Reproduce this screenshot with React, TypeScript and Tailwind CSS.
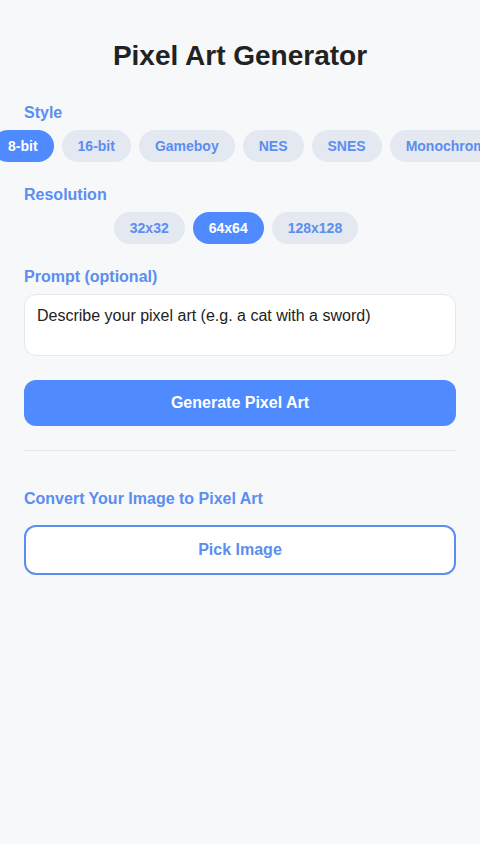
import { useState } from 'react'

const STYLES = ['8-bit', '16-bit', 'Gameboy', 'NES', 'SNES', 'Monochrome']
const RESOLUTIONS = ['32x32', '64x64', '128x128']

function Chip({ label, active, onClick }: { label: string; active: boolean; onClick: () => void }) {
  return (
    <button
      onClick={onClick}
      className={`mr-2 flex h-8 shrink-0 items-center rounded-full px-4 text-sm font-bold whitespace-nowrap ${
        active ? 'bg-[#4f8aff] text-white' : 'bg-[#e3e8f1] text-[#5b8eef]'
      }`}
    >
      {label}
    </button>
  )
}

export default function App() {
  const [style, setStyle] = useState('8-bit')
  const [res, setRes] = useState('64x64')
  const [prompt, setPrompt] = useState('')

  return (
    <div
      className="min-h-[844px] overflow-hidden bg-[#f7f8fa] px-6 pt-10"
      style={{ fontFamily: '"Liberation Sans", Arial, sans-serif' }}
    >
      <h1 className="text-center text-[28px] leading-8 font-bold text-[#222222]">Pixel Art Generator</h1>

      {/* 風格 */}
      <p className="mt-[33px] text-base leading-4 font-bold text-[#5a8ef0]">Style</p>
      <div className="mt-[9px] -ml-8 flex">
        {STYLES.map(s => (
          <Chip key={s} label={s} active={style === s} onClick={() => setStyle(s)} />
        ))}
      </div>

      {/* 解析度 */}
      <p className="mt-[25px] text-base leading-4 font-bold text-[#5a8ef0]">Resolution</p>
      <div className="mt-[9px] flex justify-center">
        {RESOLUTIONS.map(r => (
          <Chip key={r} label={r} active={res === r} onClick={() => setRes(r)} />
        ))}
      </div>

      {/* 提示詞 */}
      <p className="mt-[25px] text-base leading-4 font-bold text-[#5a8ef0]">Prompt (optional)</p>
      <textarea
        value={prompt}
        onChange={e => setPrompt(e.target.value)}
        placeholder="Describe your pixel art (e.g. a cat with a sword)"
        className="mt-[9px] block h-[62px] w-full resize-none rounded-xl border border-[#e4e7ec] bg-white px-3 py-[11px] text-base leading-[19px] text-[#222222] outline-none placeholder:text-[#222222]"
      />

      <button className="mt-6 flex h-[46px] w-full items-center justify-center rounded-xl bg-[#4f8aff] text-base font-bold text-white">
        Generate Pixel Art
      </button>

      <div className="mt-6 h-px bg-[#e4e7ec]" />

      <p className="mt-[40px] text-base leading-4 font-bold text-[#5a8ef0]">Convert Your Image to Pixel Art</p>
      <button className="mt-[18px] flex h-[50px] w-full items-center justify-center rounded-xl border-2 border-[#5b8eef] bg-white text-base font-bold text-[#5b8eef]">
        Pick Image
      </button>
    </div>
  )
}
